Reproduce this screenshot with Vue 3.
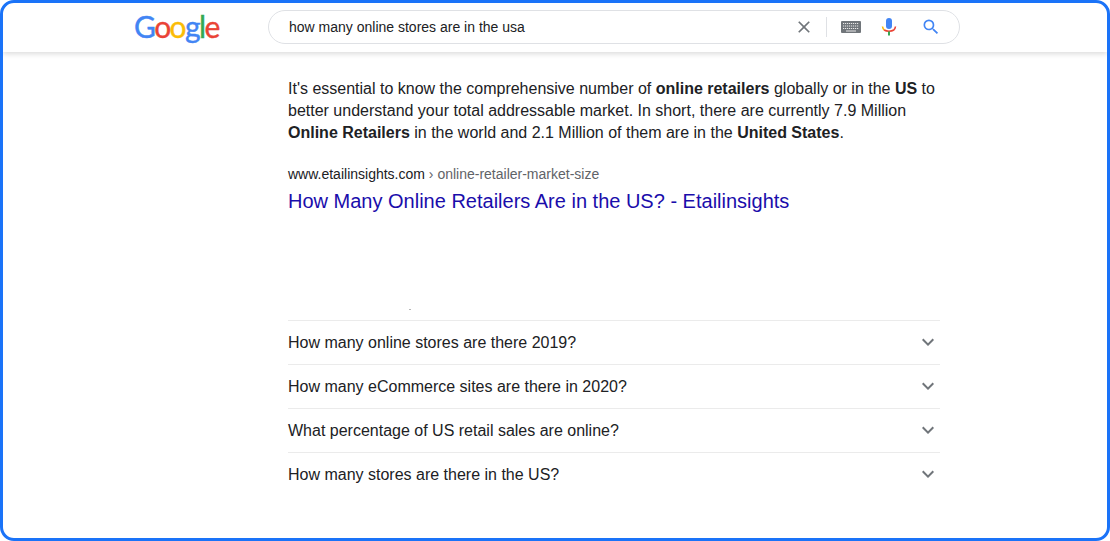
<script setup>
const questions = [
  'How many online stores are there 2019?',
  'How many eCommerce sites are there in 2020?',
  'What percentage of US retail sales are online?',
  'How many stores are there in the US?'
]
const logo = [
  ['G', '#4285f4'], ['o', '#ea4335'], ['o', '#fbbc05'], ['g', '#4285f4'], ['l', '#34a853'], ['e', '#ea4335']
]
</script>

<template>
  <div class="frame">
    <header class="topbar">
      <div class="logo">
        <span v-for="(l, i) in logo" :key="i" class="logo-letter" :style="{ color: l[1] }">{{ l[0] }}</span>
      </div>
      <div class="searchbox">
        <span class="query">how many online stores are in the usa</span>
        <svg class="clear" width="24" height="24" viewBox="0 0 24 24"><path d="M19 6.41 17.59 5 12 10.59 6.41 5 5 6.41 10.59 12 5 17.59 6.41 19 12 13.41 17.59 19 19 17.59 13.41 12z" fill="#70757a"/></svg>
        <span class="divider"></span>
        <svg class="kbd" width="20" height="12" viewBox="0 0 20 12">
          <rect width="20" height="12" rx="1" fill="#70757a"/>
          <path d="M2 2.5h16M2 5h16M2 7.5h16" stroke="#e8e8e8" stroke-width="1" stroke-dasharray="1.2 .8"/>
          <path d="M5 10h10" stroke="#e8e8e8" stroke-width="1.2"/>
        </svg>
        <svg class="mic" width="16" height="18" viewBox="0 0 16 18">
          <rect x="5" y="0" width="6" height="11" rx="3" fill="#4285f4"/>
          <path d="M1.5 8.5C1.7 10.2 2.4 11.3 3.4 12.1" stroke="#fbbc05" stroke-width="1.6" fill="none"/>
          <path d="M3.2 12C5.6 13.7 10.4 13.7 12.8 12" stroke="#ea4335" stroke-width="1.6" fill="none"/>
          <path d="M12.6 12.1C13.6 11.3 14.3 10.2 14.5 8.5" stroke="#ea4335" stroke-width="1.6" fill="none"/>
          <rect x="7" y="13.5" width="2" height="4" fill="#34a853"/>
        </svg>
        <svg class="glass" width="24" height="24" viewBox="0 0 24 24"><path d="M15.5 14h-.79l-.28-.27A6.47 6.47 0 0 0 16 9.5 6.5 6.5 0 1 0 9.5 16c1.61 0 3.09-.59 4.23-1.57l.27.28v.79l5 4.99L20.49 19l-4.99-5zm-6 0C7.01 14 5 11.99 5 9.5S7.01 5 9.5 5 14 7.01 14 9.5 11.99 14 9.5 14z" fill="#4285f4"/></svg>
      </div>
    </header>

    <main class="content">
      <p class="snippet">It's essential to know the comprehensive number of <b>online retailers</b> globally or in the <b>US</b> to better understand your total addressable market. In short, there are currently 7.9 Million <b>Online Retailers</b> in the world and 2.1 Million of them are in the <b>United States</b>.</p>
      <div class="cite">www.etailinsights.com <span class="crumb">› online-retailer-market-size</span></div>
      <a class="title">How Many Online Retailers Are in the US? - Etailinsights</a>
      <div class="dot-row"><span class="dot"></span></div>
      <ul class="faq">
        <li v-for="q in questions" :key="q" class="faq-row">
          <span>{{ q }}</span>
          <svg class="chev" width="24" height="24" viewBox="0 0 24 24"><path d="M16.59 8.59 12 13.17 7.41 8.59 6 10l6 6 6-6z" fill="#70757a"/></svg>
        </li>
      </ul>
    </main>
  </div>
</template>

<style>
html, body { margin: 0; background: #fff; }
</style>

<style scoped>
.frame {
  box-sizing: border-box;
  width: 1110px;
  height: 541px;
  border: 3px solid #1a73f8;
  border-radius: 14px;
  overflow: hidden;
  font-family: "Liberation Sans", Arial, sans-serif;
  color: #202124;
  background: #fff;
}
.topbar {
  box-sizing: border-box;
  height: 49px;
  display: flex;
  align-items: flex-start;
  padding: 7px 0 0 131px;
  box-shadow: 0 2px 5px rgba(0, 0, 0, 0.14);
}
.logo {
  width: 134px;
  height: 34px;
  font-family: "Lato", sans-serif;
  font-size: 30px;
  line-height: 32px;
  letter-spacing: -1.6px;
  white-space: nowrap;
}
.logo-letter { font-weight: 400; -webkit-text-stroke: 0.4px currentColor; }
.searchbox {
  box-sizing: border-box;
  width: 692px;
  height: 34px;
  border: 1px solid #dfe1e5;
  border-radius: 17px;
  display: flex;
  align-items: center;
  padding-left: 20px;
  font-size: 14px;
}
.query { width: 505px; white-space: nowrap; }
.clear { width: 20px; height: 20px; }
.divider { width: 1px; height: 20px; background: #dfe1e5; margin: 0 14px 0 12px; }
.kbd { margin-right: 20px; }
.mic { margin-right: 24px; }
.glass { width: 20px; height: 20px; }
.content {
  box-sizing: border-box;
  width: 652px;
  margin-left: 285px;
  padding-top: 26px;
}
.snippet {
  margin: 0;
  font-size: 16px;
  line-height: 22px;
}
.cite {
  margin-top: 20px;
  font-size: 14px;
  line-height: 20px;
}
.crumb { color: #5f6368; }
.title {
  display: block;
  margin-top: 4px;
  font-size: 20px;
  line-height: 26px;
  color: #1a0dab;
}
.dot-row { height: 106px; position: relative; }
.dot {
  position: absolute;
  left: 121px;
  top: 95px;
  width: 2px;
  height: 1px;
  background: #b5b5b5;
}
.faq { list-style: none; margin: 0; padding: 0; }
.faq-row {
  box-sizing: border-box;
  height: 44px;
  border-top: 1px solid #ebebeb;
  display: flex;
  align-items: center;
  justify-content: space-between;
  font-size: 16px;
}
.chev { margin-bottom: 2px; }
</style>
